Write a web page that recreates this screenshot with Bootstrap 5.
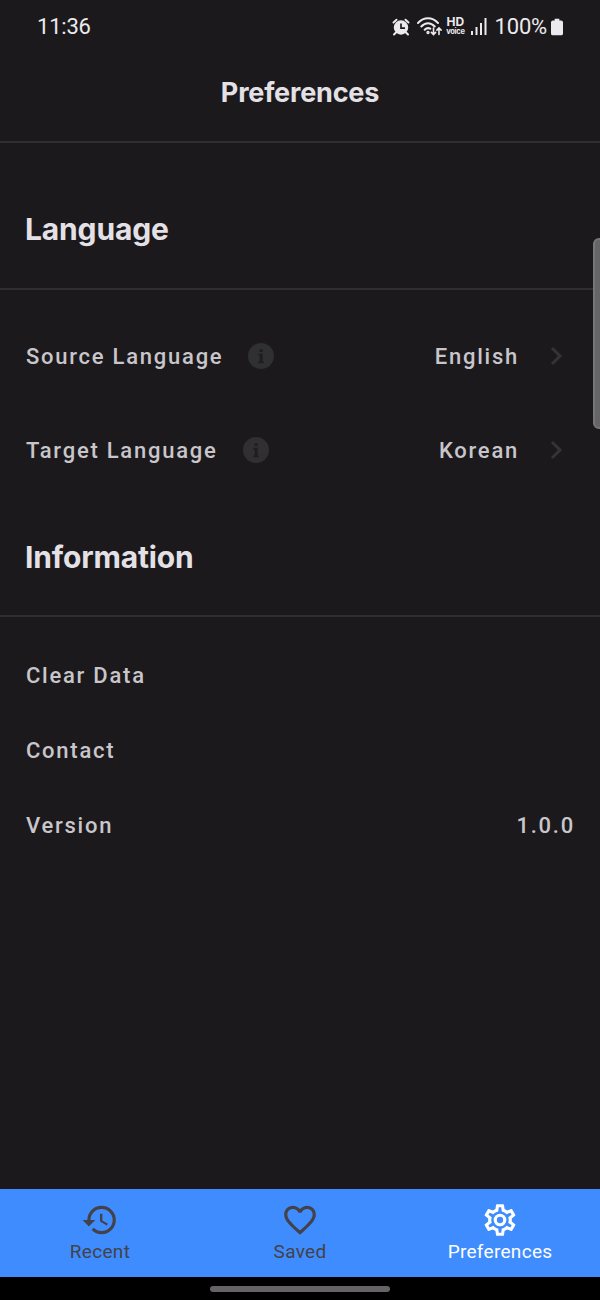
<!DOCTYPE html>
<html lang="en" data-bs-theme="dark">
<head>
<meta charset="utf-8">
<meta name="viewport" content="width=device-width, initial-scale=1">
<title>Preferences</title>
<link href="https://cdn.jsdelivr.net/npm/bootstrap@5.3.0/dist/css/bootstrap.min.css" rel="stylesheet">
<style>
body{font-family:Roboto,"Liberation Sans",sans-serif;background:#1b191c;height:1300px;overflow:hidden;line-height:1;color:#c9c6cb}
svg{display:block;flex:none}
.statusbar{height:53px;padding:0 37px 0 37px;font-size:22px;letter-spacing:-.2px;color:#eceaee}
.titlebar{height:90px;border-bottom:2px solid #302e31;padding-bottom:8px}
.titlebar h1,.section-title{font-family:Inter,Roboto,sans-serif;font-weight:700;color:#e4e1e6}
.titlebar h1{font-size:27px;letter-spacing:-.2px}
.section-title{font-size:30px;letter-spacing:-.15px;padding-left:25px;border-bottom:2px solid #302e31}
.language-title{height:147px;padding-top:27px}
.information-title{height:120px;padding-top:2px}
.pref{font-size:22px;font-weight:500;letter-spacing:1.75px;padding:0 25px 0 26px}
.lang{height:94px}
.lang span{padding-top:2px}
.info-icon{margin-left:25px}
.chevron{margin:0 12px 0 31px}
.info{height:75px}
.hd{font:700 12px/10px Inter,sans-serif;letter-spacing:0}
.hd small{font:700 7.5px/9px Inter,sans-serif;display:block;letter-spacing:-.3px}
.tabs{height:88px;background:#3f8cff;font-size:19px;letter-spacing:.3px;color:#444247}
.tabs svg{margin:12px 0 3px}
.homebar{height:23px;background:#000}
.homebar div{width:180px;height:6px;border-radius:3px;background:#656366}
.scroller{position:absolute;right:-5px;top:238px;width:12px;height:191px;border-radius:6px;background:#656466;border:2px solid #777578}
</style>
</head>
<body class="d-flex flex-column position-relative">
<header class="statusbar d-flex align-items-center justify-content-between">
  <span class="clock">11:36</span>
  <div class="d-flex align-items-center">
    <svg width="18" height="18" viewBox="0 0 18 18"><g fill="none" stroke="#eceaee" stroke-width="2" stroke-linecap="round"><path d="M1.5 4.5 4.5 1.7M16.5 4.5l-3-2.8M4 14.5l-2 2M14 14.5l2 2"/></g><circle cx="9" cy="9.5" r="7.2" fill="#eceaee"/><path d="M9 5.5v4.7h4" fill="none" stroke="#1c1a1d" stroke-width="1.7"/></svg>
    <svg style="margin-left:7px" width="25" height="19" viewBox="0 0 25 19" fill="none" stroke="#eceaee" stroke-width="2" stroke-linecap="round"><path d="M1 6C7-.2 15-.2 21 6M4.3 9.5c4-4.4 9.4-4.4 13.4 0M7.7 12.7c2-2 3.6-2 5.6-1"/><circle cx="11" cy="15.5" r=".7"/><path stroke-width="1.6" d="M16.5 11v6.5m-2.1-2.1 2.1 2.1 2.1-2.1M22 17.5V11m-2.1 2.1L22 11l2.1 2.1"/></svg>
    <div class="hd text-center ms-1">HD<small>voice</small></div>
    <svg style="margin-left:6px" width="16" height="17" viewBox="0 0 16 17" fill="#eceaee"><path d="M0 13h2v4H0zM4.5 9h2v8h-2zM9 5h2v12H9zM13.5 0h2v17h-2z"/></svg>
    <span class="pct ms-2">100%</span>
    <svg class="ms-1" width="12" height="18" viewBox="0 0 13 18" fill="#eceaee"><path d="M4 0h5v2h2q2 0 2 2v12q0 2-2 2H2q-2 0-2-2V4q0-2 2-2h2z"/></svg>
  </div>
</header>
<div class="titlebar d-flex align-items-center justify-content-center"><h1 class="m-0">Preferences</h1></div>
<main class="flex-grow-1">
  <h2 class="section-title language-title d-flex align-items-center m-0">Language</h2>
  <div style="padding-top:19px">
    <div class="pref lang d-flex align-items-center">
      <span>Source Language</span>
      <svg class="info-icon" width="26" height="26" viewBox="0 0 26 26"><circle cx="13" cy="13" r="13" fill="#302f32"/><path d="M11.7 6.2h3v2.9h-3zM10.3 10.8h4.4v7.8h1.2v1.7h-5.6v-1.7h1.3v-6h-1.3z" fill="#1f1d20"/></svg>
      <span class="ms-auto">English</span>
      <svg class="chevron" width="13" height="20" viewBox="0 0 13 20" fill="none" stroke="#353336" stroke-width="3"><path d="m2 2 8 8-8 8"/></svg>
    </div>
    <div class="pref lang d-flex align-items-center">
      <span>Target Language</span>
      <svg class="info-icon" width="26" height="26" viewBox="0 0 26 26"><circle cx="13" cy="13" r="13" fill="#302f32"/><path d="M11.7 6.2h3v2.9h-3zM10.3 10.8h4.4v7.8h1.2v1.7h-5.6v-1.7h1.3v-6h-1.3z" fill="#1f1d20"/></svg>
      <span class="ms-auto">Korean</span>
      <svg class="chevron" width="13" height="20" viewBox="0 0 13 20" fill="none" stroke="#353336" stroke-width="3"><path d="m2 2 8 8-8 8"/></svg>
    </div>
  </div>
  <h2 class="section-title information-title d-flex align-items-center m-0">Information</h2>
  <div style="padding-top:21px">
    <div class="pref info d-flex align-items-center">Clear Data</div>
    <div class="pref info d-flex align-items-center">Contact</div>
    <div class="pref info d-flex align-items-center justify-content-between"><span>Version</span><span>1.0.0</span></div>
  </div>
</main>
<nav class="tabs row g-0 text-center">
  <div class="col-4 d-flex flex-column align-items-center"><svg width="38" height="38" viewBox="0 0 24 24" fill="#444247"><path d="M13.5 8H12v5l4.28 2.54.72-1.21-3.5-2.08V8M13 3a9 9 0 0 0-9 9H1l3.96 4.03L9 12H6a7 7 0 0 1 7-7 7 7 0 0 1 7 7 7 7 0 0 1-7 7c-1.93 0-3.68-.79-4.94-2.06l-1.42 1.42A8.896 8.896 0 0 0 13 21a9 9 0 0 0 9-9 9 9 0 0 0-9-9"/></svg><span>Recent</span></div>
  <div class="col-4 d-flex flex-column align-items-center"><svg width="38" height="38" viewBox="0 0 24 24" fill="#444247"><path d="m12.1 18.55-.1.1-.11-.1C7.14 14.24 4 11.39 4 8.5 4 6.5 5.5 5 7.5 5c1.54 0 3.04 1 3.57 2.36h1.86C13.46 6 14.96 5 16.5 5c2 0 3.5 1.5 3.5 3.5 0 2.89-3.14 5.74-7.9 10.05M16.5 3c-1.74 0-3.41.81-4.5 2.08C10.91 3.81 9.24 3 7.5 3 4.42 3 2 5.41 2 8.5c0 3.77 3.4 6.86 8.55 11.53L12 21.35l1.45-1.32C18.6 15.36 22 12.27 22 8.5 22 5.41 19.58 3 16.5 3z"/></svg><span>Saved</span></div>
  <div class="col-4 d-flex flex-column align-items-center text-white"><svg width="38" height="38" viewBox="0 0 24 24" fill="#fff"><path d="M12 8a4 4 0 0 1 4 4 4 4 0 0 1-4 4 4 4 0 0 1-4-4 4 4 0 0 1 4-4m0 2a2 2 0 0 0-2 2 2 2 0 0 0 2 2 2 2 0 0 0 2-2 2 2 0 0 0-2-2m-2 12c-.25 0-.46-.18-.5-.42l-.37-2.65c-.63-.25-1.17-.59-1.69-.99l-2.49 1.01c-.22.08-.49 0-.61-.22l-2-3.46a.493.493 0 0 1 .12-.64l2.11-1.66L4.5 12l.07-1-2.11-1.63a.493.493 0 0 1-.12-.64l2-3.46c.12-.22.39-.31.61-.22l2.49 1c.52-.39 1.06-.73 1.69-.98l.37-2.65c.04-.24.25-.42.5-.42h4c.25 0 .46.18.5.42l.37 2.65c.63.25 1.17.59 1.69.98l2.49-1c.22-.09.49 0 .61.22l2 3.46c.13.22.07.49-.12.64L19.43 11l.07 1-.07 1 2.11 1.63c.19.15.25.42.12.64l-2 3.46c-.12.22-.39.31-.61.22l-2.49-1c-.52.39-1.06.73-1.69.98l-.37 2.65c-.04.24-.25.42-.5.42h-4m1.25-18-.37 2.61c-1.2.25-2.26.89-3.03 1.78L5.44 7.35l-.75 1.3L6.8 10.2a5.55 5.55 0 0 0 0 3.6l-2.12 1.56.75 1.3 2.43-1.04c.77.88 1.82 1.52 3.01 1.76l.37 2.62h1.52l.37-2.61c1.19-.25 2.24-.89 3.01-1.77l2.43 1.04.75-1.3-2.12-1.55c.4-1.17.4-2.44 0-3.61l2.11-1.55-.75-1.3-2.41 1.04a5.42 5.42 0 0 0-3.03-1.77L12.75 4h-1.5z"/></svg><span>Preferences</span></div>
</nav>
<footer class="homebar d-flex align-items-center justify-content-center"><div></div></footer>
<div class="scroller"></div>
<script src="https://cdn.jsdelivr.net/npm/bootstrap@5.3.0/dist/js/bootstrap.bundle.min.js"></script>
</body>
</html>
